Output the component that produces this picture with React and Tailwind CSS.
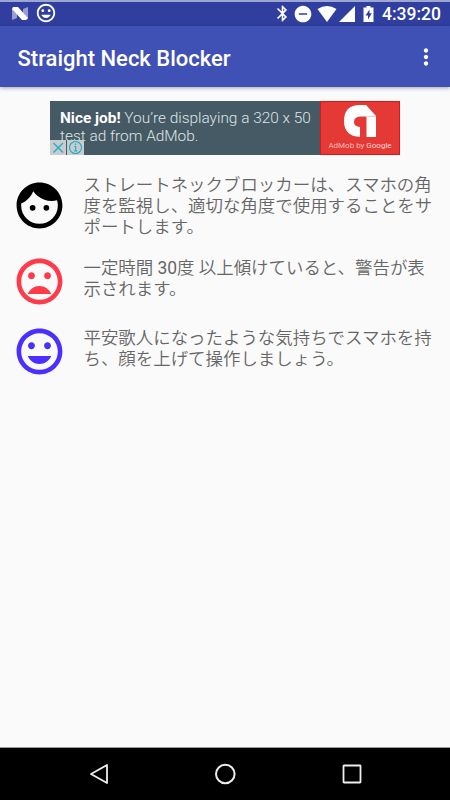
import React from "react";
import {
  MdBluetooth,
  MdDoNotDisturbOn,
  MdFace,
  MdMood,
  MdMoodBad,
  MdMoreVert,
} from "react-icons/md";

const tips = [
  {
    icon: MdFace,
    color: "text-black",
    height: "h-[83px]",
    offset: "mt-[2.5px]",
    text: ["ストレートネックブロッカーは、スマホの角", "度を監視し、適切な角度で使用することをサ", "ポートします。"],
  },
  {
    icon: MdMoodBad,
    color: "text-[#ff3b4b]",
    height: "h-[70px]",
    offset: "-mt-1",
    text: [
      <>一定時間 <span className="font-normal">30</span>度 以上傾けていると、警告が表</>,
      "示されます。",
    ],
  },
  {
    icon: MdMood,
    color: "text-[#4a30ff]",
    height: "h-[70px]",
    offset: "-mt-1",
    text: ["平安歌人になったような気持ちでスマホを持", "ち、顔を上げて操作しましょう。"],
  },
];

const StatusBar = () => (
  <div className="flex h-[26px] items-center border-t-2 border-[#9da5d3] bg-[#303f9f] pl-3 pr-[9px] text-white">
    <svg className="mt-[-1px] h-[13px] w-4" viewBox="0 0 16 13">
      <path d="M0 1L5 4V11L0 13zM11 2L16 0V12L11 9z" fill="#fff" opacity="0.5" />
      <path d="M1 0H6L15.5 10.5V12L14 13H10L0.5 2.5V1z" fill="#fff" />
    </svg>
    <MdMood className="mt-[-2px] ml-[7px] h-[22px] w-[22px]" />
    <div className="mt-[-1px] ml-auto flex items-center">
      <MdBluetooth className="h-[19px] w-[19px]" />
      <MdDoNotDisturbOn className="ml-px h-5 w-5" />
      <svg className="ml-1 h-4 w-5" viewBox="0 0 20 16">
        <path d="M0.5 3Q10 -3 19.5 3L10 16z" fill="#fff" />
      </svg>
      <svg className="ml-0.5 h-4 w-4" viewBox="0 0 16 16">
        <path d="M16 0V16H0z" fill="#fff" />
      </svg>
      <svg className="ml-2 h-4 w-[11px]" viewBox="0 0 11 16">
        <path
          fillRule="evenodd"
          d="M3.5 0H7.5V1.5H10.5V16H0.5V1.5H3.5zM6.5 3.5L2.5 9.5H5V13.5L8.8 7.3H6.5z"
          fill="#fff"
        />
      </svg>
      <span className="ml-2 pt-[2px] text-[17.5px] leading-none font-medium">4:39:20</span>
    </div>
  </div>
);

const AppBar = () => (
  <header className="relative flex h-[61px] items-center justify-between bg-[#3f51b5] pl-[17.5px] pr-[11px] text-white shadow-[0_1px_4px_rgba(0,0,0,0.35)]">
    <h1 className="pt-[3px] text-[22px] font-medium">Straight Neck Blocker</h1>
    <MdMoreVert className="h-[26px] w-[26px]" />
  </header>
);

const AdBanner = () => (
  <div className="relative mx-auto mt-[14px] flex h-[54px] w-[350px] bg-[#455a64]">
    <p className="w-[270px] pt-2 pl-2.5 text-[15.4px] leading-[18px] font-light whitespace-nowrap text-[#dfe5e8]">
      <b className="font-bold text-white">Nice job!</b> You’re displaying a 320 x 50
      <br />
      test ad from AdMob.
    </p>
    <div className="flex w-20 flex-col items-center border border-[#e01616] bg-[#e53935]">
      <svg className="mt-0.5 h-[34px] w-[34px]" viewBox="0 0 34 34">
        <path
          d="M17 1H23L33 12V33H23.5V12.5H18Q11 12.5 11 18Q11 22.5 17 23V33Q1 32 1 17Q1 1 17 1z"
          fill="#fff"
        />
        <path d="M23.5 12.5H33" stroke="#d5d5d5" />
      </svg>
      <span className="mt-[3px] text-[8px] leading-[10px] whitespace-nowrap text-[#f7bcba]">
        AdMob by <span className="text-[#fbd9d8]">Google</span>
      </span>
    </div>
    {/* AdChoices controls */}
    <div className="absolute bottom-0 left-0 flex gap-px">
      <svg className="h-[15px] w-4 bg-[#c8cccd]" viewBox="0 0 16 15">
        <path d="M3.5 3L13 12.5M13 3L3.5 12.5" stroke="#20abcb" strokeWidth="1.3" />
      </svg>
      <svg className="h-[15px] w-[17px] bg-[#c8cccd]" viewBox="0 0 17 15" fill="none" stroke="#20abcb">
        <circle cx="8.5" cy="7.5" r="6" strokeWidth="1.1" />
        <path d="M8.5 3.5V5M7.3 6.5H8.7V11M7 11H10.2" strokeWidth="1.2" />
      </svg>
    </div>
  </div>
);

const NavBar = () => (
  <nav className="flex h-[53px] items-center justify-between border-t border-[#9b9b9b] bg-black pr-[88px] pl-[89px]">
    <svg className="h-[22px] w-5" viewBox="0 0 20 22" fill="none" stroke="#eee" strokeWidth="1.8">
      <path d="M18 2V20L2 11z" strokeLinejoin="round" />
    </svg>
    <svg className="h-[22px] w-[22px]" viewBox="0 0 22 22" fill="none" stroke="#eee" strokeWidth="2">
      <circle cx="10.3" cy="11" r="9.3" />
    </svg>
    <svg className="h-[22px] w-5" viewBox="0 0 20 22" fill="none" stroke="#eee" strokeWidth="1.8">
      <rect x="1.5" y="2.5" width="17" height="17" rx="0.5" />
    </svg>
  </nav>
);

const App = () => {
  return (
    <div className="flex h-screen w-full flex-col overflow-hidden bg-[#fafafa] font-[Roboto,'Noto_Sans_CJK_JP',sans-serif]">
      <StatusBar />
      <AppBar />
      <main className="flex-1">
        <AdBanner />
        <ul className="mt-5" lang="ja">
          {tips.map((tip) => {
            const Icon = tip.icon;
            return (
              <li key={tip.color} className={`flex ${tip.height}`}>
                <Icon className={`ml-[11.5px] h-[55px] w-[55px] shrink-0 ${tip.offset} ${tip.color}`} />
                <p className="ml-[17px] text-[17.45px] leading-[20.8px] font-[350] whitespace-nowrap text-[#666]">
                  {tip.text.map((line, i) => (
                    <span key={i} className="block">{line}</span>
                  ))}
                </p>
              </li>
            );
          })}
        </ul>
      </main>
      <NavBar />
    </div>
  );
};

export default App;
